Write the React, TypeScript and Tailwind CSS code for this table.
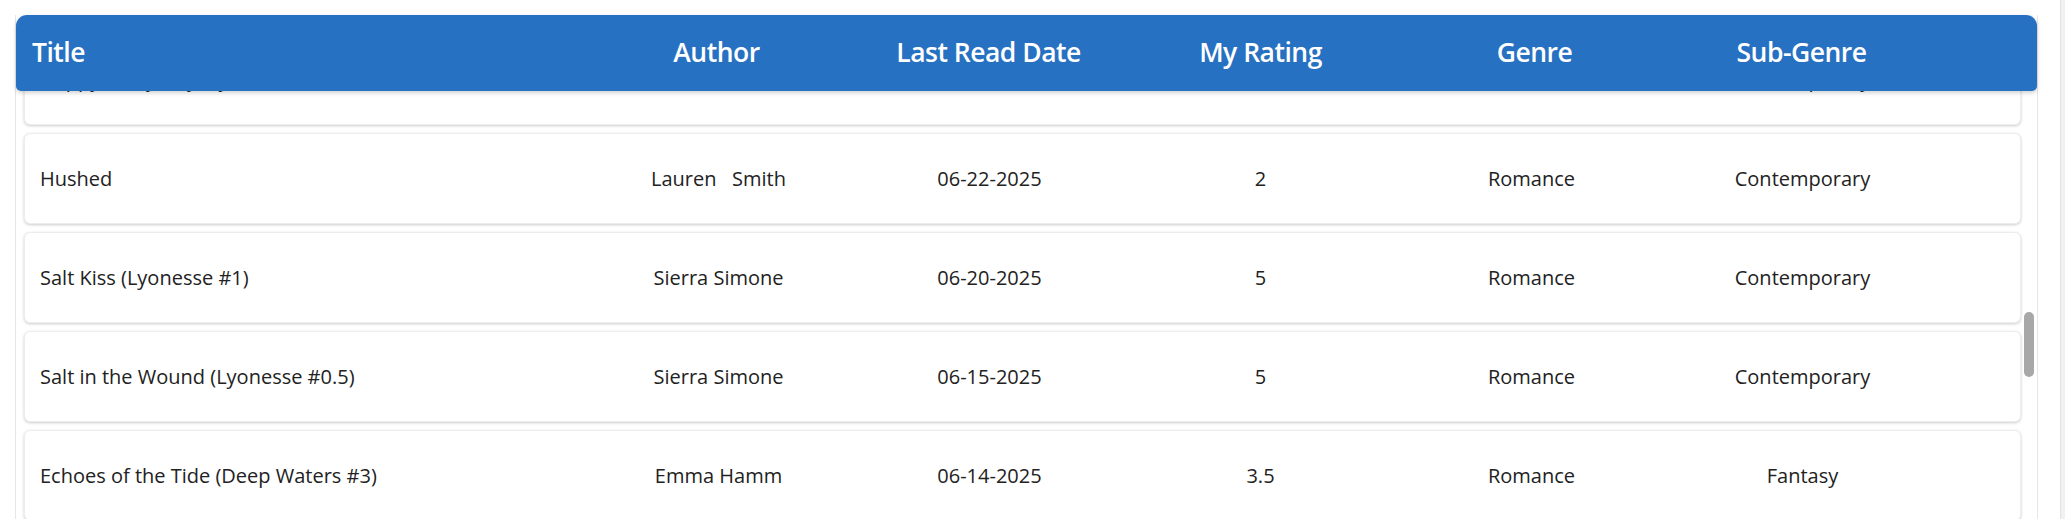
import React from "react";

type Row = {
  title: string;
  author: string;
  date: string;
  rating: string;
  genre: string;
  sub: string;
};

const rows: Row[] = [
  {
    title: "Happy Every Day (Lyonesse, #2)",
    author: "Sierra Simone",
    date: "06-24-2025",
    rating: "4",
    genre: "Romance",
    sub: "Contemporary",
  },
  {
    title: "Hushed",
    author: "Lauren   Smith",
    date: "06-22-2025",
    rating: "2",
    genre: "Romance",
    sub: "Contemporary",
  },
  {
    title: "Salt Kiss (Lyonesse #1)",
    author: "Sierra Simone",
    date: "06-20-2025",
    rating: "5",
    genre: "Romance",
    sub: "Contemporary",
  },
  {
    title: "Salt in the Wound (Lyonesse #0.5)",
    author: "Sierra Simone",
    date: "06-15-2025",
    rating: "5",
    genre: "Romance",
    sub: "Contemporary",
  },
  {
    title: "Echoes of the Tide (Deep Waters #3)",
    author: "Emma Hamm",
    date: "06-14-2025",
    rating: "3.5",
    genre: "Romance",
    sub: "Fantasy",
  },
];

export default function App() {
  return (
    <div
      className="flex h-[519px] w-[2065px] overflow-hidden bg-white"
      style={{ fontFamily: '"Open Sans", "Noto Sans", sans-serif' }}
    >
      <div className="w-[2060px] pl-[15px] pt-[15px]">
        <div className="flex h-[504px] w-[2023px] flex-col border-l border-r border-[#e6e6e6]">
          {/* Header */}
          <div className="relative z-10 grid h-[76px] grid-cols-[566px_271px_271px_271px_271px_271px_1fr] items-center rounded-t-[11px] rounded-b-[5px] bg-[#2771c2] text-[26.5px] font-semibold tracking-[-0.5px] text-white shadow-[0_2px_4px_rgba(0,0,0,0.18)]">
            <div className="pl-[16px]">Title</div>
            <div className="pr-[2px] text-center">Author</div>
            <div className="text-center">Last Read Date</div>
            <div className="pl-[2px] text-center">My Rating</div>
            <div className="pl-[8px] text-center">Genre</div>
            <div className="text-center">Sub-Genre</div>
            <div />
          </div>

          {/* Body */}
          <div className="flex min-h-0 flex-1">
            <div className="min-w-0 flex-1 overflow-hidden pl-[8px] pr-[2px]">
              <div className="-mt-[57px] flex flex-col gap-[8px]">
                {rows.map((r, i) => (
                  <div
                    key={i}
                    className="grid h-[91px] shrink-0 grid-cols-[558px_271px_271px_271px_271px_271px_1fr] items-center rounded-[6px] border border-[#ededed] bg-white text-[20px] text-[#222] shadow-[0_1px_3px_rgba(0,0,0,0.2)]"
                  >
                    <div className="pl-[15px]">{r.title}</div>
                    <div className="whitespace-pre text-center">{r.author}</div>
                    <div className="text-center">{r.date}</div>
                    <div className="text-center">{r.rating}</div>
                    <div className="text-center">{r.genre}</div>
                    <div className="text-center">{r.sub}</div>
                    <div />
                  </div>
                ))}
              </div>
            </div>
            <div className="flex w-[14px] flex-col items-start pl-[1px] pt-[221px]">
              <div className="h-[65px] w-[10px] rounded-full bg-[#a8a8a8]" />
            </div>
          </div>
        </div>
      </div>
      <div className="w-[5px] border-l border-[#e2e2e2] bg-[#f1f1f1]" />
    </div>
  );
}
